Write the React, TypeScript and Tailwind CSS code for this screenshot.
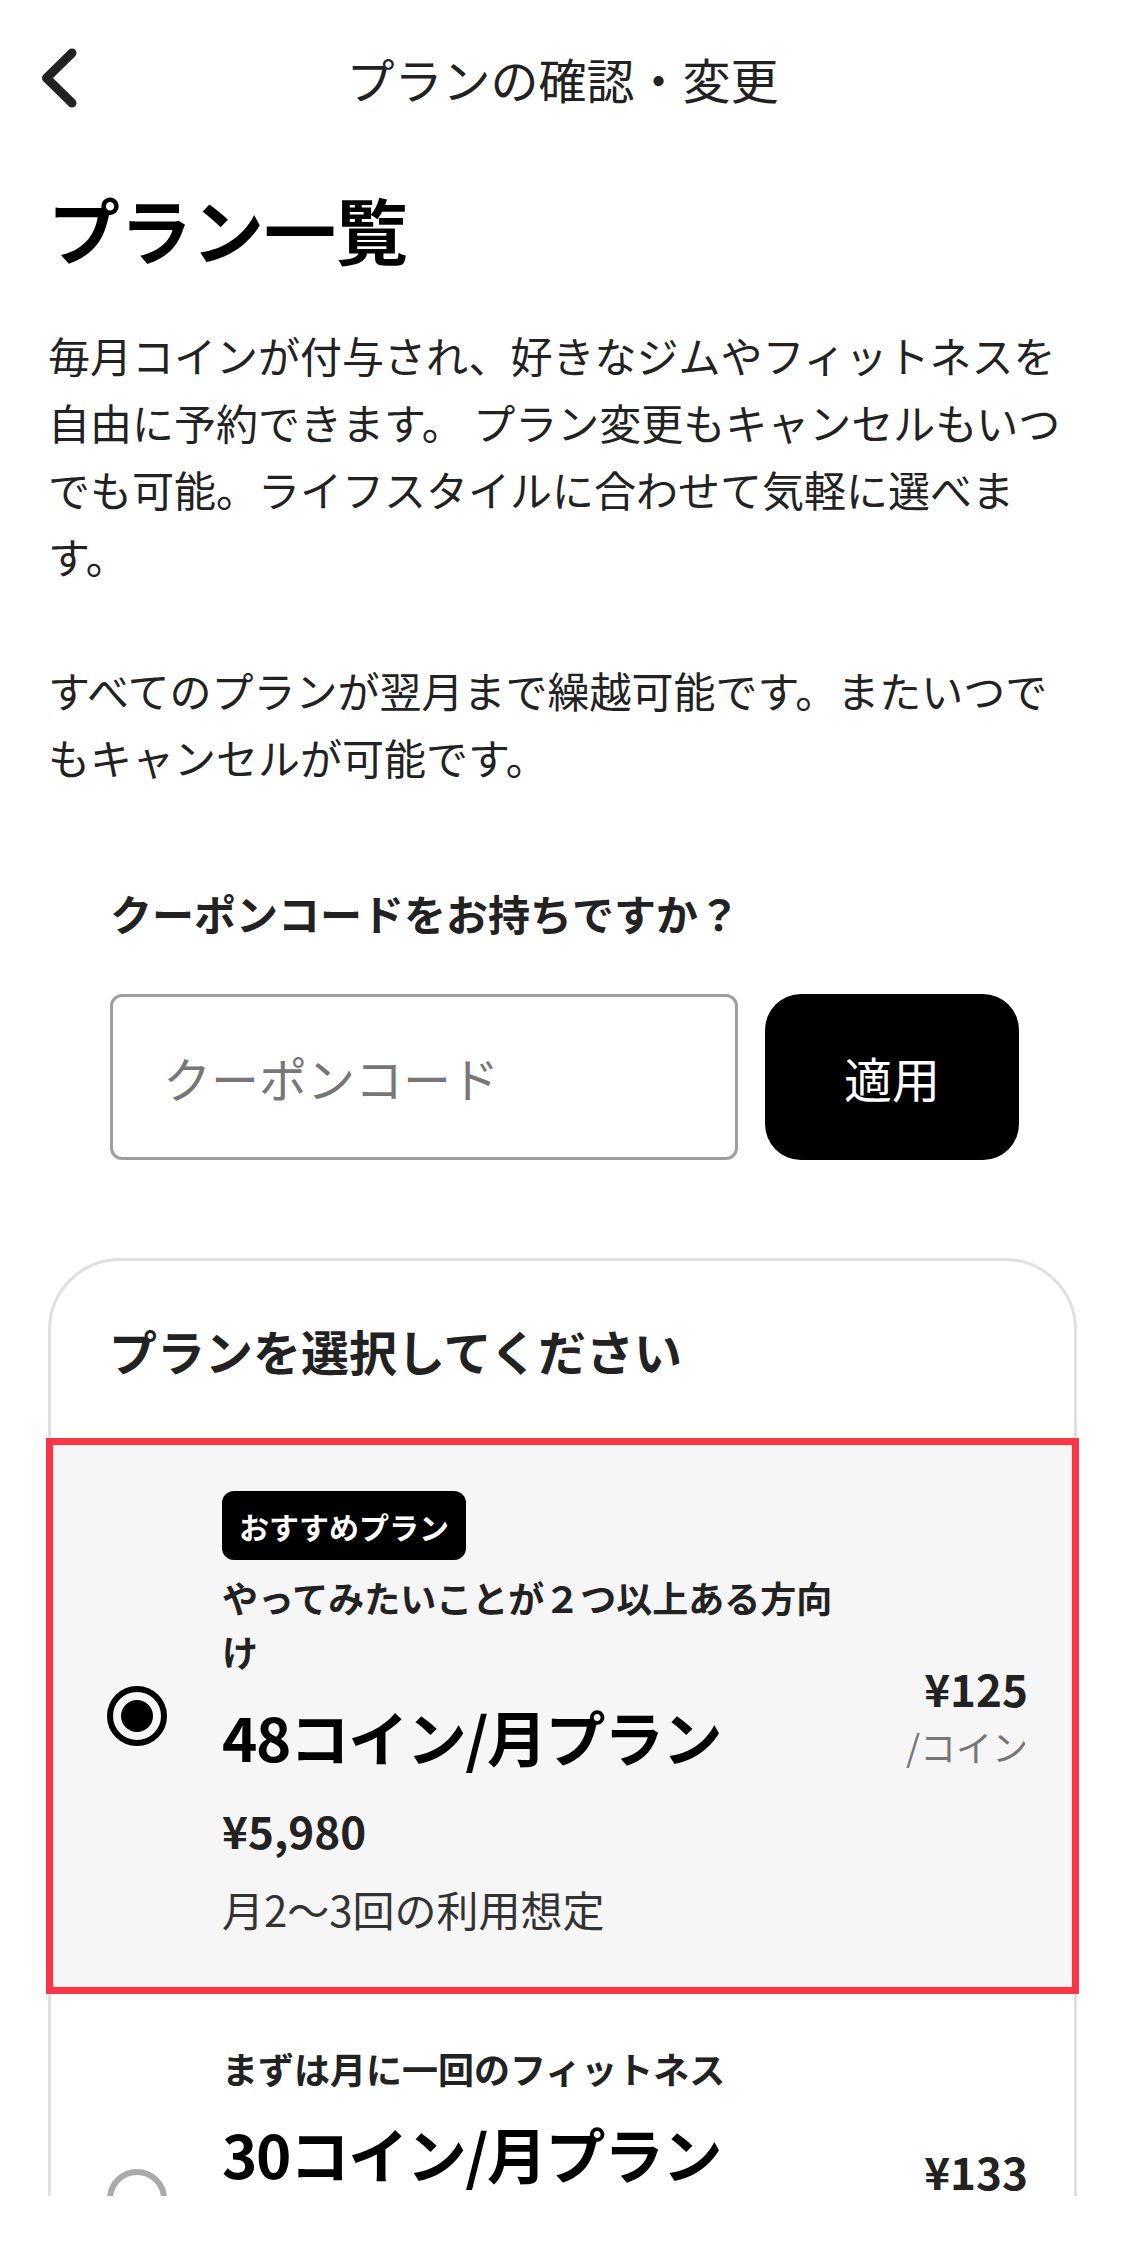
import React from "react";

type Plan = {
  id: number;
  badge?: string;
  lead: string;
  name: string;
  price: string;
  usage: string;
  unitPrice: string;
  selected: boolean;
};

const plans: Plan[] = [
  {
    id: 48,
    badge: "おすすめプラン",
    lead: "やってみたいことが２つ以上ある方向け",
    name: "48コイン/月プラン",
    price: "¥5,980",
    usage: "月2〜3回の利用想定",
    unitPrice: "¥125",
    selected: true,
  },
  {
    id: 30,
    lead: "まずは月に一回のフィットネス",
    name: "30コイン/月プラン",
    price: "¥3,980",
    usage: "月1〜2回の利用想定",
    unitPrice: "¥133",
    selected: false,
  },
];

const BackIcon = () => (
  <svg width="40" height="66" viewBox="0 0 40 66" fill="none">
    <polyline
      points="32,8 6.5,33 32,58"
      stroke="#222"
      strokeWidth="9"
      strokeLinecap="round"
      strokeLinejoin="round"
    />
  </svg>
);

const Radio = ({ checked }: { checked: boolean }) =>
  checked ? (
    <span className="flex size-[60px] shrink-0 items-center justify-center rounded-full border-[6px] border-black">
      <span className="size-[32px] rounded-full bg-black" />
    </span>
  ) : (
    <span className="size-[60px] shrink-0 rounded-full border-[6px] border-[#aaa]" />
  );

const PlanRow = ({ plan }: { plan: Plan }) => (
  <div
    className={
      plan.selected
        ? "-mx-[5px] flex items-center border-[7px] border-[#f83648] bg-[#f6f6f6] pt-[46px] pb-[47px] pl-[54px] pr-[44px] shadow-[inset_0_0_3px_rgba(0,0,0,0.12)]"
        : "-mx-[5px] flex items-center border-[7px] border-transparent pt-[40px] pb-[47px] pl-[54px] pr-[44px]"
    }
  >
    <Radio checked={plan.selected} />
    <div className="ml-[55px] w-[630px]">
      {plan.badge && (
        <span className="inline-flex h-[69px] items-center rounded-[12px] bg-black px-[17px] text-[30px] font-bold leading-none text-white">
          {plan.badge}
        </span>
      )}
      <p
        className={
          plan.badge
            ? "mt-[10px] text-[36px] font-bold leading-[54px] text-[#222]"
            : "text-[36px] font-bold leading-[54px] text-[#222]"
        }
      >
        {plan.lead}
      </p>
      <p className="mt-[16px] text-[60px] font-bold leading-[84px] tracking-[-1.5px] text-black">
        {plan.name}
      </p>
      <p className="mt-[21px] text-[44px] font-bold leading-[63px] text-[#222]">
        {plan.price}
      </p>
      <p className="mt-[15px] text-[42px] leading-[63px] text-[#333]">
        {plan.usage}
      </p>
    </div>
    <div className="flex-1 text-right">
      <p className="text-[44px] font-bold leading-[60px] text-[#222]">
        {plan.unitPrice}
      </p>
      <p className="text-[36px] leading-[56px] text-[#777]">/コイン</p>
    </div>
  </div>
);

export default function App() {
  return (
    <div className="h-[2243px] bg-white font-['Noto_Sans_CJK_JP','Noto_Sans',sans-serif] text-[#222]">
      <div className="h-[2196px] overflow-hidden">
        <header className="grid h-[156px] grid-cols-[1fr_auto_1fr] items-center">
          <button className="pl-[40px]" aria-label="戻る">
            <BackIcon />
          </button>
          <h1 className="text-[48px] leading-none text-[#222]">
            プランの確認・変更
          </h1>
          <div />
        </header>

        <main className="px-[48px]">
          <h2 className="mt-[22px] text-[72px] font-bold leading-[100px] text-black">
            プラン一覧
          </h2>
          <p className="mt-[43px] text-[42px] leading-[67px] text-[#222]">
            毎月コインが付与され、好きなジムやフィットネスを自由に予約できます。 プラン変更もキャンセルもいつでも可能。ライフスタイルに合わせて気軽に選べます。
          </p>
          <p className="mt-[67px] text-[42px] leading-[67px] text-[#222]">
            すべてのプランが翌月まで繰越可能です。またいつでもキャンセルが可能です。
          </p>

          <section className="mt-[91px] pl-[62px] pr-[58px]">
            <p className="text-[42px] font-bold leading-[63px] text-[#222]">
              クーポンコードをお持ちですか？
            </p>
            <div className="mt-[50px] flex gap-[27px]">
              <input
                className="h-[166px] min-w-0 flex-1 rounded-[12px] border-[3px] border-[#9e9e9e] bg-white pl-[50px] text-[48px] text-[#222] outline-none placeholder:text-[#777]"
                placeholder="クーポンコード"
              />
              <button className="h-[166px] w-[254px] rounded-[36px] bg-black text-[48px] text-white">
                適用
              </button>
            </div>
          </section>

          <section className="mt-[98px] rounded-[72px] border-[3px] border-[#e0e0e0]">
            <p className="pt-[53px] pb-[52px] pl-[58px] text-[48px] font-bold leading-[72px] text-[#222]">
              プランを選択してください
            </p>
            {plans.map((plan) => (
              <PlanRow key={plan.id} plan={plan} />
            ))}
          </section>
        </main>
      </div>
    </div>
  );
}
